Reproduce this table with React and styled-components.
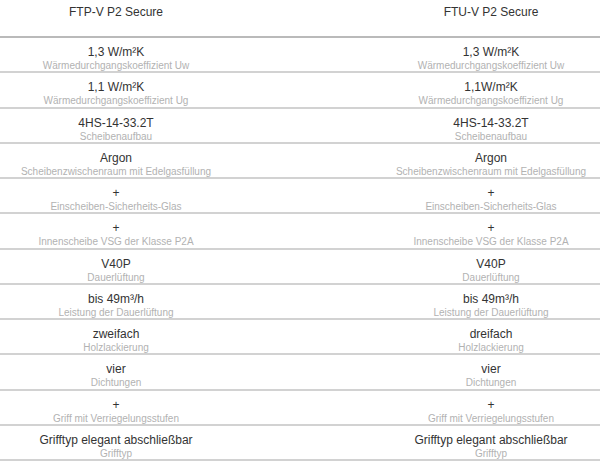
import styled, { createGlobalStyle } from 'styled-components'

const left = [
  ['1,3 W/m²K', 'Wärmedurchgangskoeffizient Uw'],
  ['1,1 W/m²K', 'Wärmedurchgangskoeffizient Ug'],
  ['4HS-14-33.2T', 'Scheibenaufbau'],
  ['Argon', 'Scheibenzwischenraum mit Edelgasfüllung'],
  ['+', 'Einscheiben-Sicherheits-Glas'],
  ['+', 'Innenscheibe VSG der Klasse P2A'],
  ['V40P', 'Dauerlüftung'],
  ['bis 49m³/h', 'Leistung der Dauerlüftung'],
  ['zweifach', 'Holzlackierung'],
  ['vier', 'Dichtungen'],
  ['+', 'Griff mit Verriegelungsstufen'],
  ['Grifftyp elegant abschließbar', 'Grifftyp'],
]

const right = left.map(([v, l], i) => {
  if (i === 1) return ['1,1W/m²K', l]
  if (i === 8) return ['dreifach', l]
  return [v, l]
})

export default function App() {
  return (
    <>
      <GlobalStyle />
      <Table>
        <HeaderRow>
          <HeadCell>FTP-V P2 Secure</HeadCell>
          <span />
          <HeadCell>FTU-V P2 Secure</HeadCell>
        </HeaderRow>
        {left.map((row, i) => (
          <Row key={i}>
            <Cell>
              <Value>{row[0]}</Value>
              <Label>{row[1]}</Label>
            </Cell>
            <span />
            <Cell>
              <Value>{right[i][0]}</Value>
              <Label>{right[i][1]}</Label>
            </Cell>
          </Row>
        ))}
      </Table>
    </>
  )
}

const GlobalStyle = createGlobalStyle`
  body {
    margin: 0;
    background: #fff;
    font-family: "Liberation Sans", Arial, sans-serif;
  }
`

const Table = styled.div`
  width: 600px;
  display: flex;
  flex-direction: column;
`

const HeaderRow = styled.div`
  display: grid;
  grid-template-columns: 232px 1fr 218px;
  box-sizing: border-box;
  height: 38px;
  padding-top: 5px;
  border-bottom: 2px solid #bababa;
`

const HeadCell = styled.div`
  text-align: center;
  font-size: 12px;
  line-height: 14px;
  color: #333;
  white-space: nowrap;
`

const Row = styled.div`
  display: grid;
  grid-template-columns: 232px 1fr 218px;
  box-sizing: border-box;
  height: 35.25px;
  padding-top: 6px;
  border-bottom: 2px solid #d2d2d2;
`

const Cell = styled.div`
  display: flex;
  flex-direction: column;
  align-items: center;
  white-space: nowrap;
`

const Value = styled.div`
  font-size: 12px;
  line-height: 16px;
  color: #333;
`

const Label = styled.div`
  font-size: 10px;
  line-height: 11px;
  color: #b2b2b2;
`
